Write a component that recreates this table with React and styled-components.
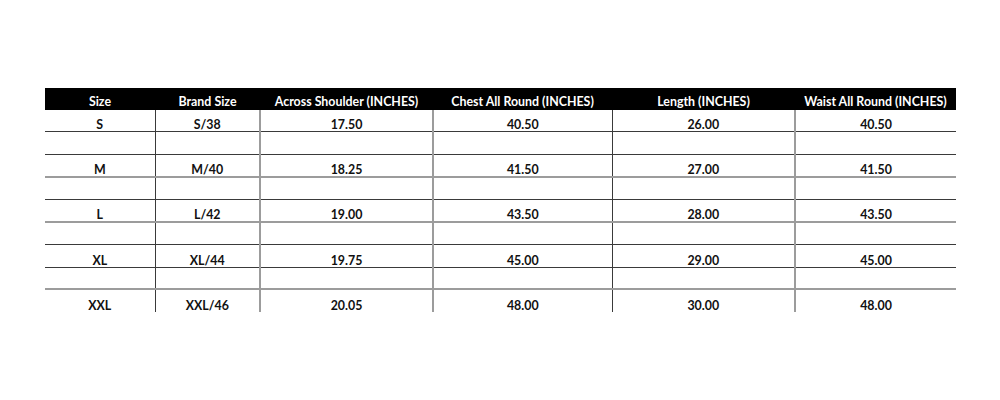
import React from 'react';
import styled, { createGlobalStyle } from 'styled-components';

const GlobalStyle = createGlobalStyle`
  html, body {
    margin: 0;
    padding: 0;
    background: #fff;
  }
  body {
    font-family: Lato, "Liberation Sans", Arial, sans-serif;
  }
`;

const Page = styled.div`
  width: 1000px;
  height: 400px;
  padding: 88px 0 0 45px;
  box-sizing: border-box;
`;

const Table = styled.table`
  width: 911px;
  border-collapse: collapse;
  table-layout: fixed;
  font-weight: 700;
  font-size: 12.4px;
`;

const HeadCell = styled.th`
  background: #000;
  color: #fff;
  height: 22px;
  padding: 4px 0 0;
  font-weight: 700;
  text-align: center;
  white-space: nowrap;
  box-sizing: border-box;
`;

const Row = styled.tr`
  height: ${(p) => p.$h}px;
  border-bottom: ${(p) => (p.$line ? `${p.$line.w}px solid ${p.$line.c}` : 'none')};
`;

const Cell = styled.td`
  padding: 0;
  vertical-align: bottom;
  line-height: 12px;
  text-align: center;
  color: #111;
  border-right: ${(p) => (p.$divider ? `${p.$divider.w}px solid ${p.$divider.c}` : 'none')};
  box-sizing: border-box;
`;

const columns = [
  { label: 'Size', width: 110 },
  { label: 'Brand Size', width: 105 },
  { label: 'Across Shoulder (INCHES)', width: 173 },
  { label: 'Chest All Round (INCHES)', width: 179 },
  { label: 'Length (INCHES)', width: 183 },
  { label: 'Waist All Round (INCHES)', width: 161 },
];

const dark = { w: 1, c: '#3a3a3a' };
const grey = { w: 2, c: '#9c9c9c' };
const dividers = [dark, grey, grey, dark, grey, null];

const sizes = [
  ['S', 'S/38', '17.50', '40.50', '26.00', '40.50'],
  ['M', 'M/40', '18.25', '41.50', '27.00', '41.50'],
  ['L', 'L/42', '19.00', '43.50', '28.00', '43.50'],
  ['XL', 'XL/44', '19.75', '45.00', '29.00', '45.00'],
  ['XXL', 'XXL/46', '20.05', '48.00', '30.00', '48.00'],
];

// each size row is followed by an empty spacer row, as in the sheet
const rows = [];
sizes.forEach((s, i) => {
  rows.push(s);
  if (i < sizes.length - 1) rows.push(null);
});

const heights = [21, 23, 23, 22, 23, 22, 23, 22, 23];
const lines = [dark, dark, grey, dark, grey, dark, dark, grey, null];

export default function App() {
  return (
    <Page>
      <GlobalStyle />
      <Table>
        <colgroup>
          {columns.map((c) => (
            <col key={c.label} style={{ width: c.width }} />
          ))}
        </colgroup>
        <thead>
          <tr>
            {columns.map((c) => (
              <HeadCell key={c.label}>{c.label}</HeadCell>
            ))}
          </tr>
        </thead>
        <tbody>
          {rows.map((r, i) => (
            <Row key={i} $h={heights[i]} $line={lines[i]}>
              {columns.map((c, j) => (
                <Cell key={c.label} $divider={dividers[j]}>
                  {r ? r[j] : ''}
                </Cell>
              ))}
            </Row>
          ))}
        </tbody>
      </Table>
    </Page>
  );
}
